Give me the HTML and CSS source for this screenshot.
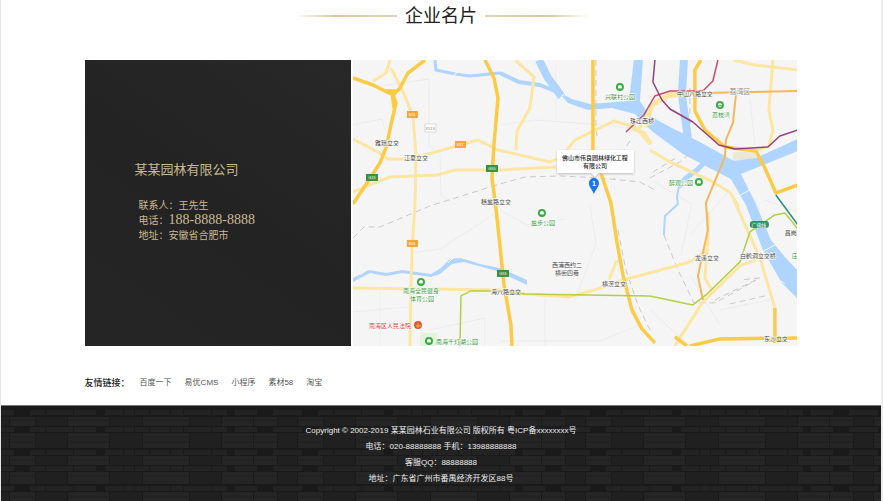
FILE: index.html
```html
<!DOCTYPE html>
<html lang="zh-CN">
<head>
<meta charset="utf-8">
<meta name="viewport" content="width=device-width, initial-scale=1">
<title>企业名片</title>
<link rel="stylesheet" href="styles.css">
</head>
<body>
<div class="page">
  <main class="content">
    <h1 class="heading">企业名片</h1>
    <section class="contact">
      <div class="card">
        <h2 class="card-title">某某园林有限公司</h2>
        <address class="card-lines">
          <p>联系人：王先生</p>
          <p>电话：<span class="phone">188-8888-8888</span></p>
          <p>地址：安徽省合肥市</p>
        </address>
      </div>
      <div class="map">
        <svg viewBox="353 60 445 286" preserveAspectRatio="xMidYMid slice" role="img" aria-label="地图">
          <rect x="353" y="60" width="445" height="286" fill="#f5f5f5"/>
          <!-- blocks and minor streets -->
          <g class="street">
            <path d="M353 125L382 119L385 130M382 86L429 79V146L440 155L441 195L456 205M411 253L440 249L495 214M500 125L535 120L590 124L630 128M556 65V120M654 182L692 204L681 255M690 275L720 325M734 165L760 210M750 100L755 145M590 205L596 244L575 300M500 210L527 225L565 219M353 312L410 307M430 330L485 318V346M380 290V346M500 341H600L640 325M545 296V346M650 310L690 346M720 310L770 300M765 200L798 212M730 190L690 235"/>
          </g>
          <rect x="420" y="333" width="17" height="13" fill="#e2f5dc"/>
          <rect x="733" y="152" width="23" height="9" fill="#ebe9da"/>
          <!-- rivers -->
          <g class="water">
            <path stroke-width="3" d="M435 60L436 70L455 74L470 76L500 73"/>
            <path stroke-width="4" d="M500 73L519 82L540 85L555 91"/>
            <path stroke-width="8" d="M539 60L548 78L562 97"/>
            <path stroke-width="5" d="M705 162L697 170L686 178L679 187"/>
            <path stroke-width="2" d="M679 187L677 197L678 204L665 216L664 235"/>
            <path stroke-width="8" d="M684 60L682 95L688 138"/>
          </g>
          <g fill="#aed4ff">
            <path d="M558 92L572 99L590 104L629 101L634 60H643L640 101L650 116L672 128L700 142L734 161L756 158L798 139V151L741 174L755 202L771 240L785 257L798 271V299L782 283L763 250L746 205L731 179L702 164L683 154L653 132L635 114L612 108L588 110L568 103Z"/>
            <path d="M353 278L369 270L386 273L402 270L431 274L441 268L450 259L461 258L480 264L500 268L527 280V285L497 271L464 262L452 264L440 274L431 277L402 273L386 276L370 273L353 282Z"/>
          </g>
          <path class="bridge" d="M558 101L564 94M734 199L753 188M762 252L777 244M360 275L364 272M448 263L453 258M453 76L459 71M781 281L785 284"/>
          <!-- railways -->
          <path class="rail" d="M353 238L364 227L380 227L430 206L500 184L525 177L560 176L600 178L640 182L655 190M596 60V130L598 140M630 141L622 153L614 180M618 230L626 270L638 305L650 330M690 88V130M664 235L678 270L694 303L715 303L755 281M715 300L760 278L740 280M730 304L765 296M650 178L680 162L690 153M653 172L676 158"/>
          <!-- secondary roads -->
          <g class="road">
            <path d="M390 60L386 73L373 81M391 68L404 94L413 117L416 155L415 205L412 250L411 285L410 346"/>
            <path d="M353 139L378 152L388 159H410L432 153L460 145L478 140L498 150L550 162L560 158L575 140L614 121L635 127L650 144"/>
            <path d="M353 192L390 177L437 175L455 170L500 170L556 167"/>
            <path d="M515 60L534 77L530 108L517 131L516 150"/>
            <path d="M650 150L670 162L711 181L730 192L739 207"/>
            <path d="M733 60L755 65L798 70M773 60L769 110L773 130L769 146L757 150"/>
            <path d="M353 288L500 290L525 294L570 297L598 289L620 281L690 262L708 250M617 260L609 280"/>
            <path d="M675 346L703 302L740 266L756 260M708 212V240L705 278L713 292"/>
            <path d="M734 200L760 258L775 308"/>
            <path d="M637 132L655 102L670 93L700 93"/>
          </g>
          <path class="road wide" d="M632 128L644 133L651 144M646 127L652 106L668 96L700 93"/>
          <!-- expressways -->
          <g class="express">
            <path d="M353 78L373 85L391 94M425 60L408 73L400 88L393 95L396 103L391 125L386 148L380 163L371 177L353 204M386 91L398 91M392 92L394 108"/>
            <path d="M485 60L494 78L498 98L494 145L492 178L496 208L500 246L504 285L511 325L512 346"/>
            <path d="M593 60V150L600 170L611 203L617 242L623 275L632 310L642 329L655 343"/>
            <path d="M701 60L695 70V111L705 130L725 147L756 151L765 168L776 193L798 185"/>
            <path d="M690 346L720 339L798 338M775 308V343M675 337L687 346M765 340H784"/>
          </g>
          <path class="orange-road" d="M736 95L733 123L726 140L725 157L706 203L708 230L698 276L703 300M703 93L798 91"/>
          <!-- metro lines -->
          <g class="metro">
            <path stroke="#b2cf45" d="M460 346L461 296L471 291H495L525 294L650 296L693 305L706 295L740 262L750 232L775 215L785 213L798 229"/>
            <path stroke="#c94b6d" d="M626 132L644 115L655 96L670 91L703 91L713 81L718 60"/>
            <path stroke="#934078" d="M655 60L653 82L662 100L670 109L693 122L719 145L735 149L768 147L780 136L798 130"/>
            <path stroke="#278d83" d="M776 195L798 225"/>
          </g>
          <!-- route shields -->
          <g class="shield">
            <rect x="407" y="111" width="11" height="7" fill="#f4a63c"/><text x="412" y="116">S55</text>
            <rect x="455" y="141" width="11" height="7" fill="#f4a63c"/><text x="460" y="146">S37</text>
            <rect x="407" y="240" width="11" height="7" fill="#f4a63c"/><text x="412" y="245">S55</text>
            <rect x="366" y="174" width="12" height="7" fill="#3c8f3c"/><text x="372" y="179">G15</text>
            <rect x="486" y="165" width="12" height="7" fill="#3c8f3c"/><text x="492" y="170">G55</text>
            <rect x="497" y="270" width="12" height="7" fill="#3c8f3c"/><text x="503" y="275">G55</text>
            <rect x="425" y="124" width="11" height="8" fill="#fff" stroke="#bbb" stroke-width=".5"/><text x="430" y="130" class="dark">X513</text>
            <rect x="750" y="221" width="19" height="7" rx="3" fill="#2f9166"/><text x="759" y="227" class="metro-name">广佛线</text>
          </g>
          <!-- place names -->
          <g class="place">
            <text x="387" y="145">雅瑶立交</text>
            <text x="416" y="160">江夏立交</text>
            <text x="496" y="204">穗盐路立交</text>
            <text x="642" y="123">珠江西桥</text>
            <text x="695" y="96">中山八路立交</text>
            <text x="567" y="267">西浦西约二</text>
            <text x="567" y="275">横街四巷</text>
            <text x="614" y="286">横滘立交</text>
            <text x="506" y="294">海八路立交</text>
            <text x="707" y="260">龙溪立交</text>
            <text x="758" y="258">白鹤洞立交桥</text>
            <text x="776" y="341">东沙立交</text>
            <text x="785" y="235" class="start">昌岗</text>
            <text x="740" y="94" class="district">荔湾区</text>
          </g>
          <g class="park">
            <text x="620" y="99">兴联村公园</text>
            <text x="721" y="117">荔枝湾</text>
            <text x="681" y="185">醉观公园</text>
            <text x="543" y="225">盐步公园</text>
            <text x="421" y="293">南海全民健身</text>
            <text x="422" y="301">体育公园</text>
            <text x="457" y="344">南海千灯湖公园</text>
            <text x="792" y="258" class="start">庄</text>
          </g>
          <text class="court" x="390" y="328">南海区人民法院</text>
          <g class="tree">
            <g transform="translate(620 87)"><circle r="3"/><path d="M0 1V4"/></g>
            <g transform="translate(720 105)"><circle r="3"/><path d="M-2 1L0 0L2 1"/></g>
            <g transform="translate(699 182)"><circle r="3"/><path d="M0 1V4"/></g>
            <g transform="translate(542 213)"><circle r="3"/><path d="M0 1V4"/></g>
            <g transform="translate(421 282)"><circle r="3"/><path d="M0 1V4"/></g>
            <g transform="translate(429 341)"><circle r="3"/><path d="M0 1V4"/></g>
          </g>
          <circle cx="418" cy="325" r="4" fill="#d85a3a"/>
          <path d="M416 326H421M418 323V328" stroke="#f7b733" stroke-width="1"/>
          <!-- company marker -->
          <g class="callout">
            <path d="M557 150H634V173H599L595 177L591 173H557Z"/>
            <text x="595" y="160">佛山市伟良园林绿化工程</text>
            <text x="595" y="168">有限公司</text>
          </g>
          <path d="M594 194C592 189 589 187 589 183A5 5 0 0 1 599 183C599 187 596 189 594 194Z" fill="#1677f2"/>
          <text class="pin" x="594" y="186">1</text>
        </svg>
      </div>
    </section>
    <nav class="links" aria-label="友情链接">
      <strong>友情链接：</strong>
      <a href="#">百度一下</a>
      <a href="#">易优CMS</a>
      <a href="#">小程序</a>
      <a href="#">素材58</a>
      <a href="#">淘宝</a>
    </nav>
  </main>
  <footer class="footer">
    <svg class="bricks" aria-hidden="true">
      <defs>
        <pattern id="wall" width="288" height="96" patternUnits="userSpaceOnUse">
          <rect width="288" height="96" fill="#1a1a1a"/>
          <g id="thick-a" fill="#252525">
            <path d="M9 11h25v9H9zM67 11h41v9H67zM142 11h46v9H142zM221 11h31v9H221zM253 11h23v9H253z"/>
            <path fill="#202020" d="M0 11h8v9H0zM35 11h31v9H35zM109 11h32v9H109zM189 11h31v9H189zM277 11h11v9H277z"/>
          </g>
          <g fill="#252525">
            <path d="M9 27h25v15H9zM67 27h41v15H67zM142 27h46v15H142zM221 27h31v15H221zM253 27h23v15H253z"/>
            <path fill="#202020" d="M0 27h8v15H0zM35 27h31v15H35zM109 27h32v15H109zM189 27h31v15H189zM277 27h11v15H277z"/>
          </g>
          <use href="#thick-a" y="39"/>
          <g fill="#252525">
            <path d="M9 66h25v12H9zM67 66h41v12H67zM142 66h46v12H142zM221 66h31v12H221zM253 66h23v12H253z"/>
            <path fill="#202020" d="M0 66h8v12H0zM35 66h31v12H35zM109 66h32v12H109zM189 66h31v12H189zM277 66h11v12H277z"/>
          </g>
          <use href="#thick-a" y="75"/>
          <g id="thin" fill="#232323">
            <path d="M0 4h13v5H0zM29 4h15v5H29zM45 4h27v5H45zM73 4h22v5H73zM104 4h18v5H104zM123 4h10v5H123zM134 4h14v5H134zM149 4h20v5H149zM170 4h12v5H170zM183 4h27v5H183zM211 4h15v5H211zM234 4h22v5H234zM272 4h16v5H272z"/>
          </g>
          <use href="#thin" y="17"/><use href="#thin" y="40"/><use href="#thin" y="56"/><use href="#thin" y="76"/>
          <path d="M0 14H288M0 31H288M0 36H288M0 54H288M0 70H288M0 91H288" stroke="#1f1f1f"/>
        </pattern>
      </defs>
      <rect width="100%" height="100%" fill="url(#wall)"/>
    </svg>
    <p>Copyright © 2002-2019 某某园林石业有限公司 版权所有 粤ICP备xxxxxxxx号</p>
    <p>电话：020-88888888 手机：13988888888</p>
    <p>客服QQ：88888888</p>
    <p>地址：广东省广州市番禺经济开发区88号</p>
  </footer>
</div>
</body>
</html>
```

FILE: styles.css
```css
* {
  box-sizing: border-box;
}

body {
  margin: 0;
  background: #fff;
  font-family: "Liberation Sans", "Noto Sans CJK SC", sans-serif;
}

h1, h2, p {
  margin: 0;
}

.page {
  display: flex;
  flex-direction: column;
  min-height: 100vh;
  border-left: 1px solid #e4e4e4;
  border-right: 2px solid #ececec;
}

.content {
  width: 81%;
  margin: 0 auto;
}

.heading {
  display: flex;
  align-items: center;
  justify-content: center;
  gap: 8px;
  height: 32px;
  color: #222;
  font-size: 18px;
  font-weight: 400;
  line-height: 32px;
}

.heading::before,
.heading::after {
  content: "";
  width: 104px;
  height: 2px;
  background: linear-gradient(to right, transparent, #d8c8a0 40%, #dfd4b8);
}

.heading::after {
  background: linear-gradient(to left, transparent, #d8c8a0 40%, #dfd4b8);
}

.contact {
  display: grid;
  grid-template-columns: 266fr 445fr;
  gap: 2px;
  margin-top: 28px;
}

.card {
  display: flex;
  flex-direction: column;
  justify-content: center;
  gap: 20px;
  padding-left: 50px;
  background: linear-gradient(215deg, #282828, #232323 50%, #252525);
  color: #c9ba94;
}

.card-title {
  font-size: 13px;
  font-weight: 400;
  line-height: 16px;
}

.card-lines {
  padding-left: 4px;
  font-size: 10px;
  font-style: normal;
  line-height: 15px;
}

.phone {
  font-family: "Liberation Serif", serif;
  font-size: 14px;
  line-height: 1;
}

.map svg {
  display: block;
  width: 100%;
}

.map path {
  stroke-linejoin: round;
}

.street path {
  fill: none;
  stroke: #ececec;
  stroke-width: 1;
}

.water path {
  fill: none;
  stroke: #aed4ff;
}

.bridge {
  fill: none;
  stroke: #f8fbff;
  stroke-width: 1;
}

.rail {
  fill: none;
  stroke: #c9c9c9;
  stroke-width: 1;
  stroke-dasharray: 6 4;
}

.road path,
.road.wide {
  fill: none;
  stroke: #fde6a2;
  stroke-width: 3;
}

.road.wide {
  stroke-width: 4;
}

.express path {
  fill: none;
  stroke: #fccb45;
  stroke-width: 3.5;
}

.orange-road {
  fill: none;
  stroke: #f5b75a;
  stroke-width: 2;
}

.metro path {
  fill: none;
  stroke-width: 1.5;
}

.map text {
  text-anchor: middle;
}

.map text.start {
  text-anchor: start;
}

.shield text {
  fill: #fff;
  font-size: 4px;
}

.shield .dark {
  fill: #888;
}

.shield .metro-name {
  font-size: 5px;
}

.place text,
.park text,
.court {
  fill: #444;
  stroke: #fff;
  stroke-width: 1;
  paint-order: stroke;
  font-size: 6px;
}

.park text {
  fill: #3b9a43;
}

.place .district {
  fill: #888;
  font-size: 7px;
}

.map .court {
  fill: #cf4545;
}

.tree circle,
.tree path {
  fill: #fff;
  stroke: #3bab48;
  stroke-width: 2;
}

.tree path {
  stroke-width: 1;
}

.callout path {
  fill: #fff;
  filter: drop-shadow(0 1px 1px #bbb);
}

.callout text {
  fill: #222;
  font-size: 6px;
  font-weight: 500;
}

.map .pin {
  fill: #fff;
  font-size: 7px;
  font-weight: 700;
}

.links {
  display: flex;
  flex-wrap: wrap;
  align-items: center;
  gap: 13px;
  padding: 29px 0 14px;
  font-size: 8px;
  line-height: 16px;
}

.links strong {
  margin-right: -3px;
  color: #222;
  font-size: 9px;
  font-weight: 500;
}

.links a {
  color: #555;
  text-decoration: none;
}

.footer {
  position: relative;
  flex: 1;
  padding: 17px 0 14px;
  border-top: 1px solid #777;
  background: #191919;
  color: #eee;
  font-size: 8px;
  line-height: 16px;
  text-align: center;
}

.footer p {
  position: relative;
}

.bricks {
  position: absolute;
  inset: 0;
  width: 100%;
  height: 100%;
}
```
